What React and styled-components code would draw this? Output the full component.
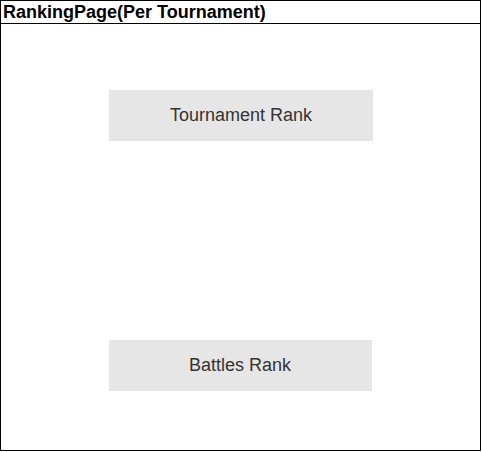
import React from "react";
import styled, { createGlobalStyle } from "styled-components";

const GlobalStyle = createGlobalStyle`
  html, body {
    margin: 0;
    padding: 0;
    background: #ffffff;
  }
`;

const Frame = styled.div`
  box-sizing: border-box;
  width: 481px;
  height: 451px;
  border: 1px solid #000000;
  display: flex;
  flex-direction: column;
  font-family: "Liberation Sans", Arial, sans-serif;
`;

const Header = styled.header`
  box-sizing: border-box;
  height: 23px;
  border-bottom: 1px solid #000000;
  padding: 0 0 0 2px;
  display: flex;
  align-items: center;
  font-size: 18px;
  line-height: 22px;
  font-weight: bold;
  color: #000000;
`;

const Body = styled.main`
  flex: 1;
  display: flex;
  flex-direction: column;
  align-items: center;
  padding-top: 66px;
  gap: 199px;
`;

const RankButton = styled.div`
  box-sizing: border-box;
  width: ${({ $width }) => $width}px;
  height: 51px;
  background: #e6e6e6;
  color: #333333;
  font-size: 18px;
  display: flex;
  align-items: center;
  justify-content: center;
  margin-left: ${({ $shift }) => $shift}px;
`;

export default function App() {
  return (
    <>
      <GlobalStyle />
      <Frame>
        <Header>RankingPage(Per Tournament)</Header>
        <Body>
          <RankButton $width={264} $shift={1}>Tournament Rank</RankButton>
          <RankButton $width={263} $shift={-1}>Battles Rank</RankButton>
        </Body>
      </Frame>
    </>
  );
}
